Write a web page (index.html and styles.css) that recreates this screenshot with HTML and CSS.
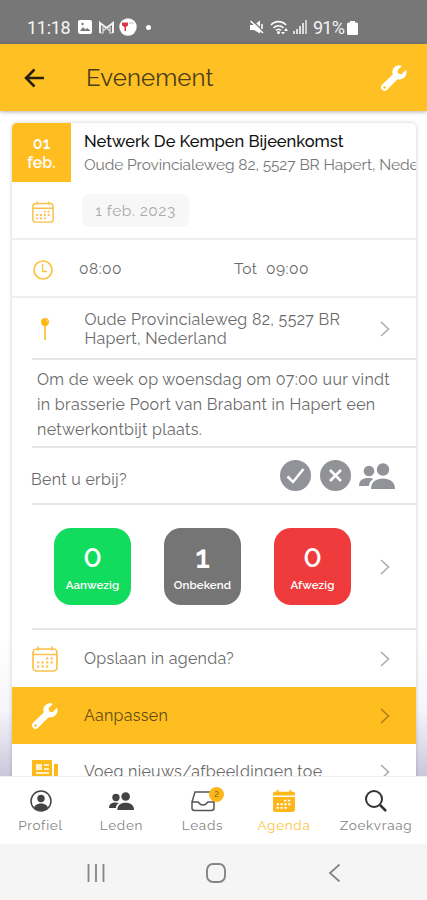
FILE: index.html
```html
<!DOCTYPE html>
<html lang="nl">
<head>
<meta charset="utf-8">
<title>Evenement</title>
<link rel="stylesheet" href="styles.css">
</head>
<body>
<svg class="defs" aria-hidden="true">
  <symbol id="wrench" viewBox="0 0 24 24"><path fill="currentColor" fill-rule="evenodd" d="M23.4 5.2a.6.6 0 0 0-1-.2l-3.5 3.5-3.1-.6-.5-3 3.5-3.5a.6.6 0 0 0-.3-1C15-.5 10.500 1.700 10.500 6.500c0 .8.1 1.500.3 2.200L1 18.300a3.200 3.200 0 1 0 4.600 4.600l9.700-9.800c4.700 1.300 9.200-2.800 8.100-7.900zM3.300 22a1.200 1.200 0 1 1 0-2.400 1.200 1.200 0 0 1 0 2.400z"/></symbol>
  <symbol id="calendar" viewBox="0 0 26 26"><g fill="none" stroke="currentColor" stroke-width="1.700"><rect x="1" y="3" width="24" height="22" rx="3.500"/><path d="M1 8.500h24M6 .5v4M20 .5v4"/></g><path fill="none" stroke="currentColor" stroke-width="2.200" stroke-dasharray="2.300 2.200" d="M14 12.500h8M5 16.500h16M5 20.500h12"/></symbol>
  <symbol id="chevron" viewBox="0 0 10 16"><path d="M1 1l7.500 7L1 15" fill="none" stroke="currentColor" stroke-width="1.500"/></symbol>
  <symbol id="people" viewBox="0 0 36 26"><g fill="currentColor"><circle cx="10" cy="8" r="5.300"/><path d="M0 23c0-6 4-8 9.500-8 2 0 3.500.4 4.800 1-2.800 1.700-4.300 4-4.300 7z"/><circle cx="24" cy="6.500" r="6.200"/><path d="M12 26c0-7 5-10.500 12-10.500S36 19 36 26z"/></g></symbol>
</svg>
<div class="status">
  <span class="clock">11:18</span>
  <svg class="s-img" viewBox="0 0 14 14"><rect width="14" height="14" rx="2" fill="#fff"/><path d="M2 11l3-4 2.500 2.500L9.500 8l3 3z" fill="#777"/><circle cx="4.500" cy="4" r="1.200" fill="#777"/></svg>
  <svg class="s-mail" viewBox="0 0 17 13"><path d="M2 12V2l6.500 5L15 2v10" fill="none" stroke="#f3f3f3" stroke-width="2"/><path d="M2 12h3V6M15 12h-3V6M5 10l3.500-3L12 10" fill="none" stroke="#ddd" stroke-width="1.200"/></svg>
  <svg class="s-app" viewBox="0 0 18 18"><circle cx="9" cy="9" r="8.700" fill="#fff"/><path d="M3 4.500h6v3L7 9v4H5.500V9L3 7.500z" fill="#d9364c"/><path d="M10 5h5" stroke="#bbb"/></svg>
  <span class="dot"></span>
  <span class="grow"></span>
  <svg class="s-mute" viewBox="0 0 14 14"><path d="M0 5h4l6-4.500v13L4 10H0z" fill="#fff"/><path d="M2 0l12 12" stroke="#777" stroke-width="1.500"/><path d="M.5 1l12.500 12M12 4v5" stroke="#fff" stroke-width="1.500" fill="none"/></svg>
  <svg class="s-wifi" viewBox="0 0 19 15"><g fill="none" stroke="#fff" stroke-width="1.600"><path d="M1 5C5 .5 12 .5 16 5M3.500 8c3-3 7-3 10 0M6 10.500c1.500-1.500 3.500-1.500 5 0"/></g><circle cx="8.500" cy="12.500" r="1.500" fill="#fff"/><path d="M11 12l2 2.500 2-2.500zM14 11l2-3 2 3z" fill="#fff"/></svg>
  <svg class="s-sig" viewBox="0 0 14 14"><path d="M1 14v-3M4 14v-5M7 14V6M10 14V3" stroke="#ddd" stroke-width="2"/><path d="M13 14V0" stroke="#ccc" stroke-width="2"/></svg>
  <span class="pct">91%</span>
  <svg class="s-bat" viewBox="0 0 11 14"><path d="M3 0h5v1.500h1.500A1.500 1.500 0 0 1 11 3v9.500a1.500 1.500 0 0 1-1.500 1.500h-8A1.500 1.500 0 0 1 0 12.500V3a1.500 1.500 0 0 1 1.500-1.500H3z" fill="#fff"/></svg>
</div>
<header class="bar">
  <svg class="back" viewBox="0 0 20 20"><path d="M20 10H2M10.500 1.500L2 10l8.500 8.500" fill="none" stroke="#28200a" stroke-width="2.500"/></svg>
  <h1>Evenement</h1>
  <svg class="tool"><use href="#wrench"/></svg>
</header>
<main>
  <div class="card">
    <section class="head">
      <div class="date"><span>01</span><span>feb.</span></div>
      <div class="titles"><h2>Netwerk De Kempen Bijeenkomst</h2><p>Oude Provincialeweg 82, 5527 BR Hapert, Nederland</p></div>
    </section>
    <section class="row day"><svg class="cal"><use href="#calendar"/></svg><span class="pill">1 feb. 2023</span></section>
    <section class="row time">
      <svg class="clk" viewBox="0 0 20 20"><circle cx="10" cy="10" r="9" fill="none" stroke="#fbc23c" stroke-width="1.600"/><path d="M9.500 4v7.500H14" fill="none" stroke="#fbc23c" stroke-width="1.300"/></svg>
      <span class="from">08:00</span><span class="tot">Tot</span><span class="until">09:00</span>
    </section>
    <section class="place inset">
      <svg class="pin" viewBox="0 0 8 22"><path d="M4 5v17" stroke="#fbc136" stroke-width="1.700"/><circle cx="4" cy="4" r="3.900" fill="#fbb814"/><path d="M4.500 1.500A2.500 2.500 0 0 1 6.500 4" stroke="#ffe08c" fill="none"/></svg>
      <p>Oude Provincialeweg 82, 5527 BR<br>Hapert, Nederland</p><svg class="chev"><use href="#chevron"/></svg>
    </section>
    <section class="desc inset">Om de week op woensdag om 07:00 uur vindt<br>in brasserie Poort van Brabant in Hapert een<br>netwerkontbijt plaats.</section>
    <section class="rsvp inset"><span>Bent u erbij?</span>
      <svg class="rb" viewBox="0 0 31 31"><circle cx="15.500" cy="15.500" r="15.500" fill="#929398"/><path d="M7.500 16.500l5.500 5.500L23.500 9" fill="none" stroke="#fff" stroke-width="2.500"/></svg>
      <svg class="rb" viewBox="0 0 31 31"><circle cx="15.500" cy="15.500" r="15.500" fill="#929398"/><path d="M10 10l11 11M21 10L10 21" fill="none" stroke="#fff" stroke-width="2.500"/></svg>
      <svg class="rp"><use href="#people"/></svg>
    </section>
    <section class="stats inset">
      <div class="stat green"><b>0</b><span>Aanwezig</span></div>
      <div class="stat grey"><b class="old">1</b><span>Onbekend</span></div>
      <div class="stat red"><b>0</b><span>Afwezig</span></div>
      <svg class="chev"><use href="#chevron"/></svg>
    </section>
    <section class="row act"><svg class="big"><use href="#calendar"/></svg><span>Opslaan in agenda?</span><svg class="chev"><use href="#chevron"/></svg></section>
    <section class="row act edit"><svg class="big"><use href="#wrench"/></svg><span>Aanpassen</span><svg class="chev"><use href="#chevron"/></svg></section>
    <section class="row act news"><svg class="big" viewBox="0 0 26 26"><path d="M0 1h20v24H3a3 3 0 0 1-3-3zM22 5h4v17a3 3 0 0 1-4 3z" fill="#fdbb1b"/><path d="M4 5h6v6H4z" fill="#fff3cf"/><path d="M12 6h5M12 10h5M4 14h13M4 18h13" stroke="#fff" stroke-width="1.500"/></svg><span>Voeg nieuws/afbeeldingen toe</span><svg class="chev"><use href="#chevron"/></svg></section>
  </div>
</main>
<nav class="tabs">
  <div class="tab a"><svg viewBox="0 0 22 22"><circle cx="11" cy="11" r="10" fill="none" stroke="#444" stroke-width="1.500"/><circle cx="11" cy="8.500" r="3.700" fill="#444"/><path d="M4 18c1-6 13-6 14 0-4 4-10 4-14 0z" fill="#444"/></svg><span>Profiel</span></div>
  <div class="tab b"><svg class="pp"><use href="#people"/></svg><span>Leden</span></div>
  <div class="tab c"><svg viewBox="0 0 24 22"><path d="M1 12L4 2h16l3 10v6a2.500 2.500 0 0 1-2.500 2.500h-17A2.500 2.500 0 0 1 1 18zh6c1 0 1 3 5 3s4-3 5-3h6" fill="none" stroke="#555" stroke-width="1.500"/></svg><i>2</i><span>Leads</span></div>
  <div class="tab d"><svg viewBox="0 0 24 24"><path d="M0 7.500h24V21a3 3 0 0 1-3 3H3a3 3 0 0 1-3-3zM0 6V4a2 2 0 0 1 2-2h2V0h2v2h12V0h2v2h2a2 2 0 0 1 2 2v2z" fill="#fdb71a"/><path d="M12 11.500h8M4 15.500h16M4 19.500h12" stroke="#fff" stroke-width="2" stroke-dasharray="2.500 1.700"/></svg><span>Agenda</span></div>
  <div class="tab e"><svg viewBox="0 0 22 22"><circle cx="9" cy="9" r="8" fill="none" stroke="#333" stroke-width="2"/><path d="M15 15l6 6" stroke="#333" stroke-width="2.500"/></svg><span>Zoekvraag</span></div>
</nav>
<footer class="sys">
  <svg viewBox="0 0 18 18"><path d="M1.500 0v18M9 0v18M16.500 0v18" stroke="#858585" stroke-width="1.800"/></svg>
  <svg class="home" viewBox="0 0 20 20"><rect x="1" y="1" width="18" height="18" rx="6" fill="none" stroke="#858585" stroke-width="1.900"/></svg>
  <svg viewBox="0 0 18 18"><path d="M13.500 .5L4 9l9.500 8.500" fill="none" stroke="#858585" stroke-width="1.800"/></svg>
</footer>
</body>
</html>
```
FILE: styles.css
```css
* { box-sizing: border-box; }
body { margin: 0; width: 427px; height: 900px; overflow: hidden; display: flex; flex-direction: column; font-family: Raleway, Lato, "Open Sans", sans-serif; color: #6a6a6a; background: #fff; }
h1, h2, p { margin: 0; font-weight: 400; }
svg { display: block; flex: none; }
span { white-space: nowrap; }
.defs { position: absolute; width: 0; height: 0; }
.grow { flex: 1; }

.status { height: 44px; flex: none; background: #777; color: #f4f4f4; display: flex; align-items: center; padding: 10px 69px 0 27px; font-family: Roboto, sans-serif; font-size: 18px; }
.clock { width: 51px; letter-spacing: -.3px; }
.s-img { width: 14px; height: 14px; margin-right: 6px; }
.s-mail { width: 17px; height: 13px; margin-right: 4px; }
.s-app { width: 18px; height: 18px; }
.dot { width: 5px; height: 5px; border-radius: 50%; background: #fff; margin-left: 9px; }
.s-mute { width: 14px; height: 14px; margin-right: 6px; }
.s-wifi { width: 19px; height: 15px; margin-right: 4px; }
.s-sig { width: 14px; height: 14px; margin-right: 6px; }
.pct { letter-spacing: -.8px; width: 34px; }
.s-bat { width: 11px; height: 14px; margin-top: 1px; }

.bar { height: 67px; flex: none; background: #ffc023; display: flex; align-items: center; padding: 0 20px 0 24px; box-shadow: 0 1px 4px rgba(0,0,0,.3); z-index: 1; }
.back { width: 20px; height: 20px; }
h1 { flex: 1; margin-left: 42px; font-size: 24px; letter-spacing: .1px; color: #4c3e18; }
.tool { width: 26px; height: 26px; color: #fff; }

main { flex: 1; min-height: 0; overflow: hidden; padding: 12px 11px 0 12px; background: linear-gradient(#fff 0, #fff 79%, #f6f5fa 90%, #c9c8dc 100%); }
.card { background: #fff; border-radius: 5px 5px 0 0; box-shadow: 0 0 4px rgba(0,0,0,.2); overflow: hidden; }
.head { height: 59px; display: flex; overflow: hidden; }
.date { width: 59px; flex: none; background: #ffbd20; color: #fff; display: flex; flex-direction: column; align-items: center; justify-content: center; font-size: 16px; font-weight: 600; line-height: 19px; }
.titles { margin-left: 13px; padding-top: 7px; white-space: nowrap; }
h2 { font-size: 16.500px; line-height: 23px; letter-spacing: -.03px; font-weight: 500; color: #111; }
.titles p { font-size: 15.500px; line-height: 23px; letter-spacing: -.1px; color: #777; }
.row { display: flex; align-items: center; border-bottom: 2px solid #eee; }
.inset { position: relative; }
.inset::after { content: ""; position: absolute; left: 20px; right: 0; bottom: 0; height: 2px; background: #e6e6e6; }
.day { height: 58px; padding-left: 20px; }
.cal { width: 22px; height: 22px; color: #fbc14a; margin-right: 28px; margin-top: 4px; }
.pill { width: 107px; height: 33px; line-height: 33px; text-align: center; border-radius: 8px; background: #f7f7f7; color: #aaa; font-size: 15.500px; letter-spacing: .5px; }
.time { height: 58px; padding-left: 21px; font-size: 15.500px; letter-spacing: .5px; }
.clk { width: 20px; height: 20px; margin-top: 4px; }
.from { margin-left: 26px; width: 155px; }
.tot { width: 32px; }
.place { height: 62px; padding-left: 29px; font-size: 16px; letter-spacing: .3px; line-height: 19px; display: flex; align-items: center; }
.place p { margin-left: 35.500px; }
.pin { width: 8px; height: 22px; }
.chev { width: 10px; height: 16px; margin-left: auto; margin-right: 26px; color: #aaa; }
.desc { height: 88px; padding: 7px 0 0 25px; font-size: 16px; line-height: 25px; letter-spacing: .32px; }
.rsvp { height: 57px; display: flex; align-items: center; padding: 0 21px 2px 19px; font-size: 16px; letter-spacing: .3px; }
.rsvp > span { flex: 1; padding-top: 7px; }
.rb { width: 31px; height: 31px; margin-right: 9px; }
.rp { width: 36px; height: 26px; color: #929398; margin-left: -1px; }
.stats { height: 125px; display: flex; align-items: center; padding: 0 0 2px 42px; gap: 33px; }
.stats .chev { margin-left: -4px; margin-right: 0; }
.stat { width: 77px; height: 77px; border-radius: 17px; color: #fff; display: flex; flex-direction: column; align-items: center; flex: none; padding-top: 15px; }
.stat b { font-size: 26px; line-height: 31px; font-weight: 600; font-variant-numeric: lining-nums; }
.stat .old { font-variant-numeric: oldstyle-nums; font-size: 31px; transform: translateY(-1px); }
.stat span { font-size: 11.500px; line-height: 22px; font-weight: 600; letter-spacing: .1px; }
.green { background: #12dc5d; }
.grey { background: #757575; }
.red { background: #f03b3c; }
.act { height: 57px; padding-left: 20px; font-size: 16px; letter-spacing: .28px; border-bottom: 0; }
.act > span { margin-left: 26px; }
.big { width: 26px; height: 26px; color: #fbc14a; }
.edit { background: #ffbe20; color: #624c12; }
.edit .big { color: #fff; }
.edit .chev { color: #a97d18; }
.news { padding-bottom: 2px; }

.tabs { height: 68px; flex: none; background: #fff; display: flex; border-top: 1px solid #f0f0f0; z-index: 1; }
.tab { width: 81px; display: flex; flex-direction: column; align-items: center; padding-top: 13px; position: relative; font-size: 13.500px; color: #858585; letter-spacing: .7px; }
.tab svg { width: 22px; height: 22px; }
.tab .pp { width: 25px; height: 22px; color: #444; }
.tab.c svg, .tab.d svg { width: 24px; }
.tab span { line-height: 17px; margin-top: 5px; }
.tab i { position: absolute; left: 47px; top: 10px; width: 15px; height: 15px; border-radius: 50%; background: #fdb71a; color: #7a5712; font: 9px/14px Raleway, sans-serif; text-align: center; letter-spacing: 0; }
.tab.d { width: 82px; color: #fbc441; }
.tab.e { width: 102px; }
.sys { height: 56px; flex: none; background: #f5f5f5; display: flex; align-items: center; padding: 2px 0 0 87px; gap: 100.500px; }
.sys svg { width: 18px; height: 18px; }
.sys .home { width: 20px; height: 20px; }
```
